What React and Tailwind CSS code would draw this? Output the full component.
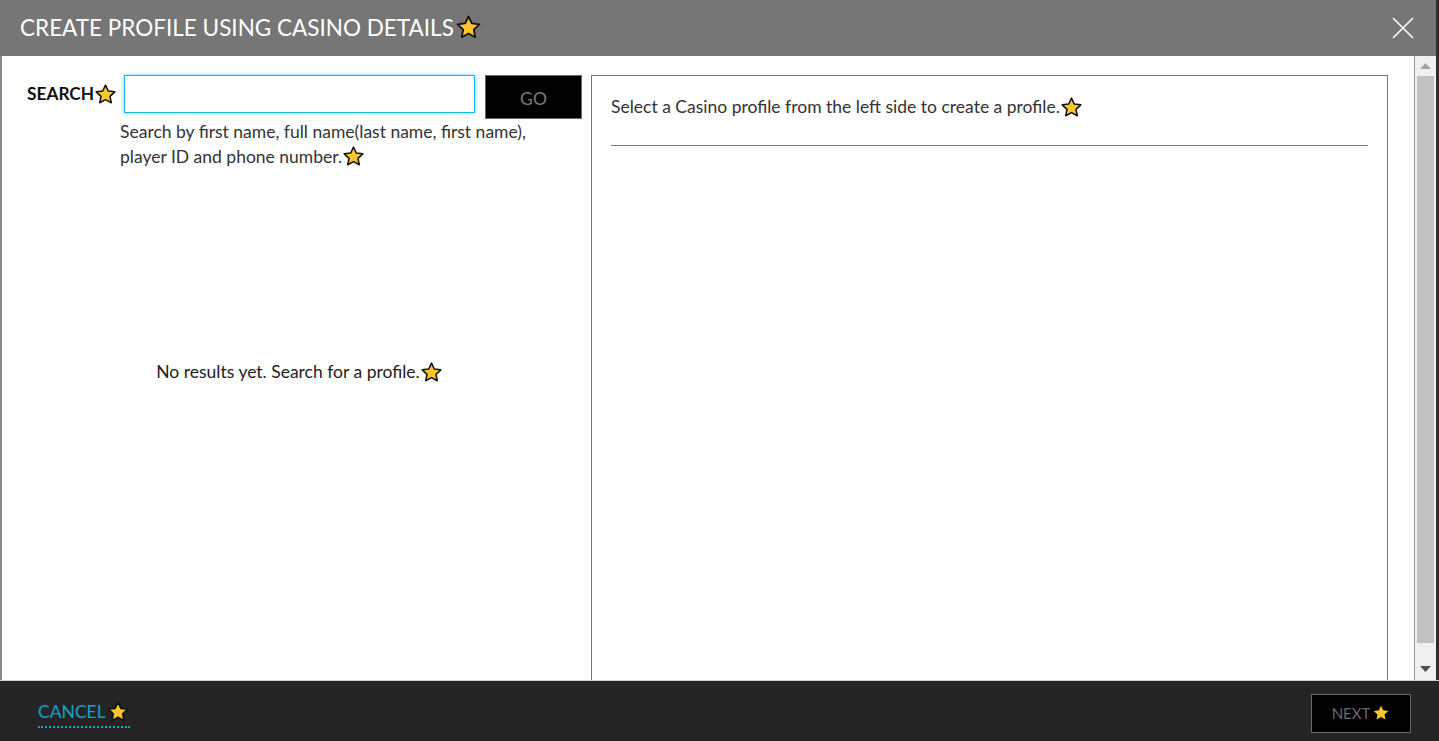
import React from "react";

function Star({ size = 20, outline = true, className = "" }) {
  return (
    <svg width={size} height={size} viewBox="0 0 24 24" className={className}>
      <path
        d="M12 2.2l2.9 6.2 6.8.8-5 4.7 1.3 6.7L12 17.3l-6 3.3 1.3-6.7-5-4.7 6.8-.8z"
        fill="#fcc42d"
        stroke={outline ? "#111" : "none"}
        strokeWidth={outline ? 1.6 : 0}
        strokeLinejoin="round"
      />
    </svg>
  );
}

export default function App() {
  return (
    <div
      className="w-[1439px] h-[741px] flex flex-col overflow-hidden bg-white"
      style={{ fontFamily: "Lato, 'Open Sans', sans-serif" }}
    >
      {/* Header */}
      <div className="h-[56px] shrink-0 bg-[#767676] flex items-center justify-between pl-[20px] pr-[22px] border-r-[3px] border-[#2e2e2e]">
        <div className="flex items-center text-white text-[22.5px] leading-none gap-[1px]">
          <span>CREATE PROFILE USING CASINO DETAILS</span>
          <Star size={27} className="-mt-[2px]" />
        </div>
        <svg width="22" height="22" viewBox="0 0 22 22">
          <path d="M1 1L21 21M21 1L1 21" stroke="#fff" strokeWidth="1.6" />
        </svg>
      </div>

      {/* Body */}
      <div className="flex-1 flex min-h-0">
        <div className="flex-1 flex border-l-2 border-[#8a8a8a] border-r border-r-[#9a9a9a] overflow-hidden">
          {/* Left column */}
          <div className="w-[589px] shrink-0 flex flex-col pt-[19px]">
            <div className="flex items-start">
              <div className="w-[122px] pl-[25px] flex items-center h-[38px] text-[17.3px] font-bold text-[#111]">
                <span>SEARCH</span>
                <Star size={23} />
              </div>
              <input
                className="w-[351px] h-[38px] border border-[#19b5dc] shadow-[0_0_4px_#5fd0ee] outline-none px-2"
                type="text"
              />
              <button className="ml-[10px] w-[97px] h-[44px] pt-[5px] bg-black border border-[#6a6a6a] text-[#7a7a7a] text-[17.5px]">
                GO
              </button>
            </div>
            <div className="pl-[118px] text-[17.5px] leading-[25px] text-[#333]">
              <div>Search by first name, full name(last name, first name),</div>
              <div className="flex items-center">
                player ID and phone number.
                <Star size={23} />
              </div>
            </div>
            <div className="mt-[190px] flex items-center justify-center text-[17.5px] text-[#222] pl-[6px]">
              <span>No results yet. Search for a profile.</span>
              <Star size={23} />
            </div>
          </div>

          {/* Right panel */}
          <div className="w-[797px] shrink-0 mt-[19px] h-[640px] border border-[#777] px-[19px] pt-[19px]">
            <div className="flex items-center text-[17.5px] text-[#333] h-[24px]">
              <span>Select a Casino profile from the left side to create a profile.</span>
              <Star size={23} />
            </div>
            <div className="mt-[26px] border-t border-[#777]" />
          </div>
        </div>

        {/* Scrollbar */}
        <div className="w-[21px] shrink-0 bg-[#f0f0f0] flex flex-col items-center">
          <div className="h-[20px] w-full flex items-center justify-center">
            <svg width="11" height="6" viewBox="0 0 11 6">
              <path d="M5.5 0L11 6H0z" fill="#a3a3a3" />
            </svg>
          </div>
          <div className="h-[567px] w-[17px] bg-[#c1c1c1]" />
          <div className="flex-1" />
          <div className="h-[22px] w-full flex items-center justify-center">
            <svg width="11" height="6" viewBox="0 0 11 6">
              <path d="M0 0H11L5.5 6z" fill="#505050" />
            </svg>
          </div>
        </div>
        <div className="w-[3px] shrink-0 bg-[#2e2e2e]" />
      </div>

      {/* Footer */}
      <div className="h-[61px] shrink-0 bg-[#252525] border-t border-[#d0d0d0] flex items-center justify-between pl-[38px] pr-[28px]">
        <div className="flex items-center text-[#13a0cc] text-[17.5px] border-b-2 border-dotted border-[#13a0cc] pb-[1px] mt-[5px]">
          <span>CANCEL</span>
          <Star size={24} />
        </div>
        <div className="w-[100px] h-[39px] bg-black border border-[#6a6a6a] flex items-center justify-center text-[#6a6a6a] text-[15px] gap-[2px] mt-[4px]">
          <span>NEXT</span>
          <Star size={18} outline={false} />
        </div>
      </div>
    </div>
  );
}
